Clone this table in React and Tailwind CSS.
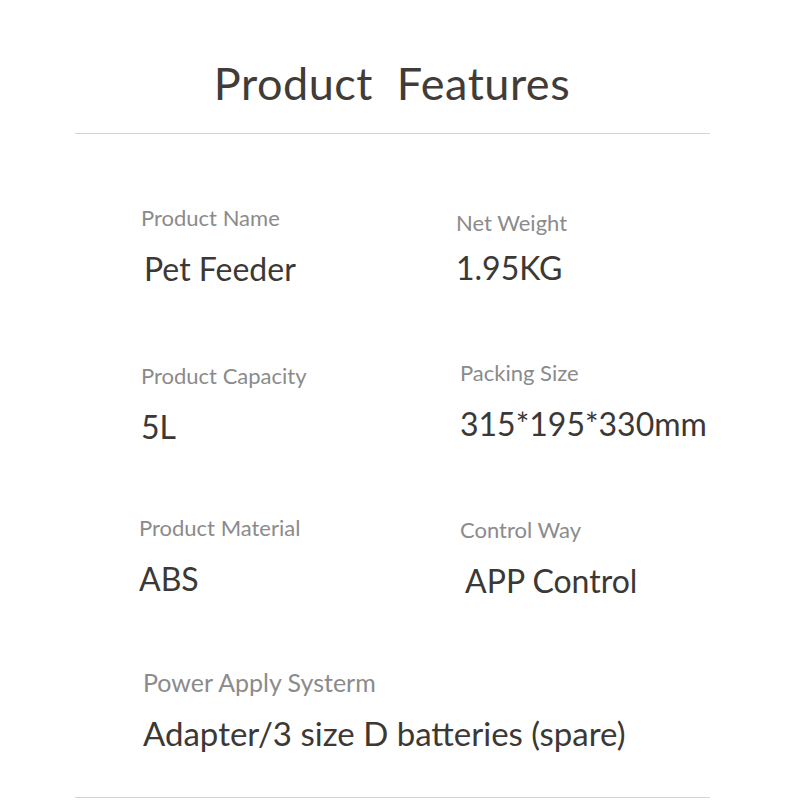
import React from 'react';

const font = { fontFamily: 'Lato, "Open Sans", sans-serif' };

function Cell({ label, value, className = '', valueClass = '' }) {
  return (
    <div className={`flex flex-col ${className}`}>
      <div className="text-[22px] leading-[26px] text-[#8b8b8b]">{label}</div>
      <div className={`text-[32px] leading-[38px] text-[#3b3835] ${valueClass}`}>{value}</div>
    </div>
  );
}

export default function App() {
  return (
    <div className="w-[800px] h-[800px] bg-white overflow-hidden" style={font}>
      <h1 className="text-center text-[45px] leading-[54px] text-[#413c38] pt-[56px] pr-[16px] tracking-[0.5px]">
        Product&nbsp;&nbsp;Features
      </h1>
      <div className="ml-[75px] mr-[90px] mt-[23px] border-t border-[#d4d4d4]" />
      <div className="flex flex-col pl-[141px] pt-[71px]">
        <div className="flex h-[155px]">
          <Cell label="Product Name" value="Pet Feeder" className="w-[315px]" valueClass="mt-[19px] ml-[3px]" />
          <Cell label="Net Weight" value="1.95KG" className="mt-[5px]" valueClass="mt-[13px]" />
        </div>
        <div className="flex h-[155px]">
          <Cell label="Product Capacity" value="5L" className="w-[319px] mt-[3px]" valueClass="mt-[19px]" />
          <Cell label="Packing Size" value="315*195*330mm" valueClass="mt-[19px]" />
        </div>
        <div className="flex h-[152px]">
          <Cell label="Product Material" value="ABS" className="w-[321px] -ml-[2px]" valueClass="mt-[19px]" />
          <Cell label="Control Way" value="APP Control" className="mt-[2px]" valueClass="mt-[19px] ml-[5px]" />
        </div>
        <div className="flex flex-col ml-[2px]">
          <div className="text-[25px] leading-[30px] text-[#8b8b8b]">Power Apply Systerm</div>
          <div className="text-[33px] leading-[40px] text-[#3b3835] mt-[16px]">Adapter/3 size D batteries (spare)</div>
        </div>
      </div>
      <div className="ml-[75px] mr-[90px] mt-[44px] border-t border-[#d4d4d4]" />
    </div>
  );
}
